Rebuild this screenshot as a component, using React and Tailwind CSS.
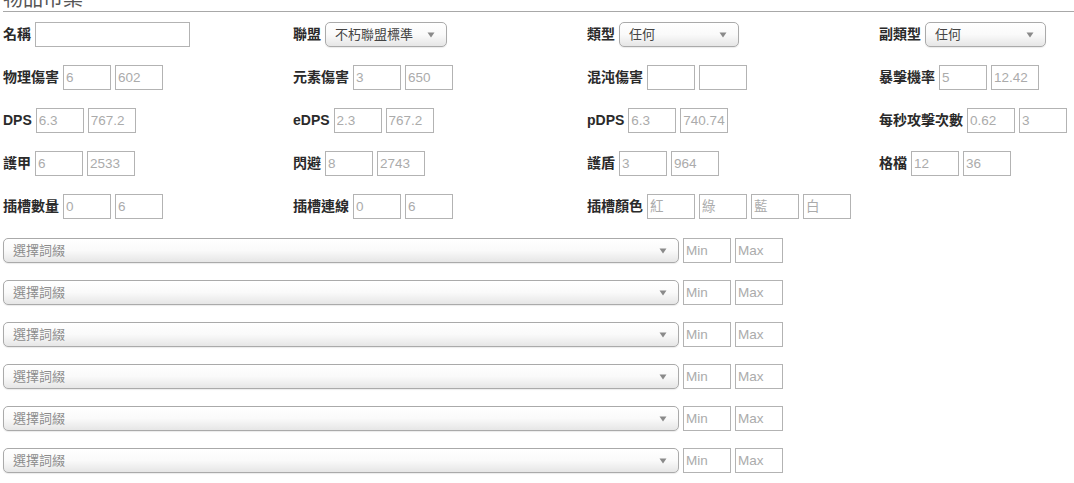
import React from "react";

const FONT = "font-['Liberation_Sans','Noto_Sans_CJK_TC',sans-serif]";

const Arrow = () => (
  <svg width="8" height="6" viewBox="0 0 8 6" className="shrink-0">
    <path d="M0.5 0.5 L7.5 0.5 L4 5.5 Z" fill="#8a8a8a" />
  </svg>
);

const Box = ({ ph, w = "w-[48px]" }) => (
  <input
    placeholder={ph}
    className={`${w} h-[25px] border border-[#b3b3b3] bg-white px-[2px] text-[13.5px] text-[#555] placeholder:text-[#ababab] outline-none`}
  />
);

const Select = ({ text, w, muted }) => (
  <div
    className={`${w} h-[25px] flex items-center justify-between pl-[9px] pr-[11px] rounded-[5px] border border-[#aaa] bg-linear-to-b from-white via-[#fafafa] to-[#e6e6e6] shadow-[0_1px_1px_rgba(0,0,0,0.08)]`}
  >
    <span className={`text-[13px] ${muted ? "text-[#8c8c8c]" : "text-[#444]"}`}>{text}</span>
    <Arrow />
  </div>
);

const Label = ({ children }) => (
  <span className="text-[14px] font-bold text-[#2a2a2a] whitespace-nowrap">{children}</span>
);

const Field = ({ label, values }) => (
  <div className="flex items-center gap-1">
    <Label>{label}</Label>
    {values.map((v, i) => (
      <Box key={i} ph={v} />
    ))}
  </div>
);

const rows = [
  [
    { label: "物理傷害", values: ["6", "602"] },
    { label: "元素傷害", values: ["3", "650"] },
    { label: "混沌傷害", values: ["", ""] },
    { label: "暴擊機率", values: ["5", "12.42"] },
  ],
  [
    { label: "DPS", values: ["6.3", "767.2"] },
    { label: "eDPS", values: ["2.3", "767.2"] },
    { label: "pDPS", values: ["6.3", "740.74"] },
    { label: "每秒攻擊次數", values: ["0.62", "3"] },
  ],
  [
    { label: "護甲", values: ["6", "2533"] },
    { label: "閃避", values: ["8", "2743"] },
    { label: "護盾", values: ["3", "964"] },
    { label: "格檔", values: ["12", "36"] },
  ],
];

export default function App() {
  return (
    <div className={`${FONT} w-[1074px] h-[483px] overflow-hidden bg-white`}>
      {/* Title */}
      <h2 className="-mt-[13px] ml-[3px] h-[25px] leading-[24px] text-[20px] text-[#555] border-b border-[#a8a8a8]">
        物品市集
      </h2>

      <div className="ml-[3px] mt-[10px] grid grid-cols-[290px_294px_292px_198px] gap-y-[18px]">
        {/* Row 1 */}
        <div className="flex items-center gap-1">
          <Label>名稱</Label>
          <Box w="w-[155px]" ph="" />
        </div>
        <div className="flex items-center gap-1">
          <Label>聯盟</Label>
          <Select text="不朽聯盟標準" w="w-[122px]" />
        </div>
        <div className="flex items-center gap-1">
          <Label>類型</Label>
          <Select text="任何" w="w-[120px]" />
        </div>
        <div className="flex items-center gap-1">
          <Label>副類型</Label>
          <Select text="任何" w="w-[121px]" />
        </div>

        {rows.map((r) =>
          r.map((f) => <Field key={f.label} label={f.label} values={f.values} />)
        )}

        {/* Sockets */}
        <Field label="插槽數量" values={["0", "6"]} />
        <Field label="插槽連線" values={["0", "6"]} />
        <Field label="插槽顏色" values={["紅", "綠", "藍", "白"]} />
        <div />
      </div>

      {/* Affix filters */}
      <div className="ml-[3px] mt-[19px] flex flex-col gap-[17px]">
        {Array.from({ length: 6 }).map((_, i) => (
          <div key={i} className="flex items-center gap-1">
            <Select text="選擇詞綴" w="w-[676px]" muted />
            <Box ph="Min" />
            <Box ph="Max" />
          </div>
        ))}
      </div>
    </div>
  );
}
